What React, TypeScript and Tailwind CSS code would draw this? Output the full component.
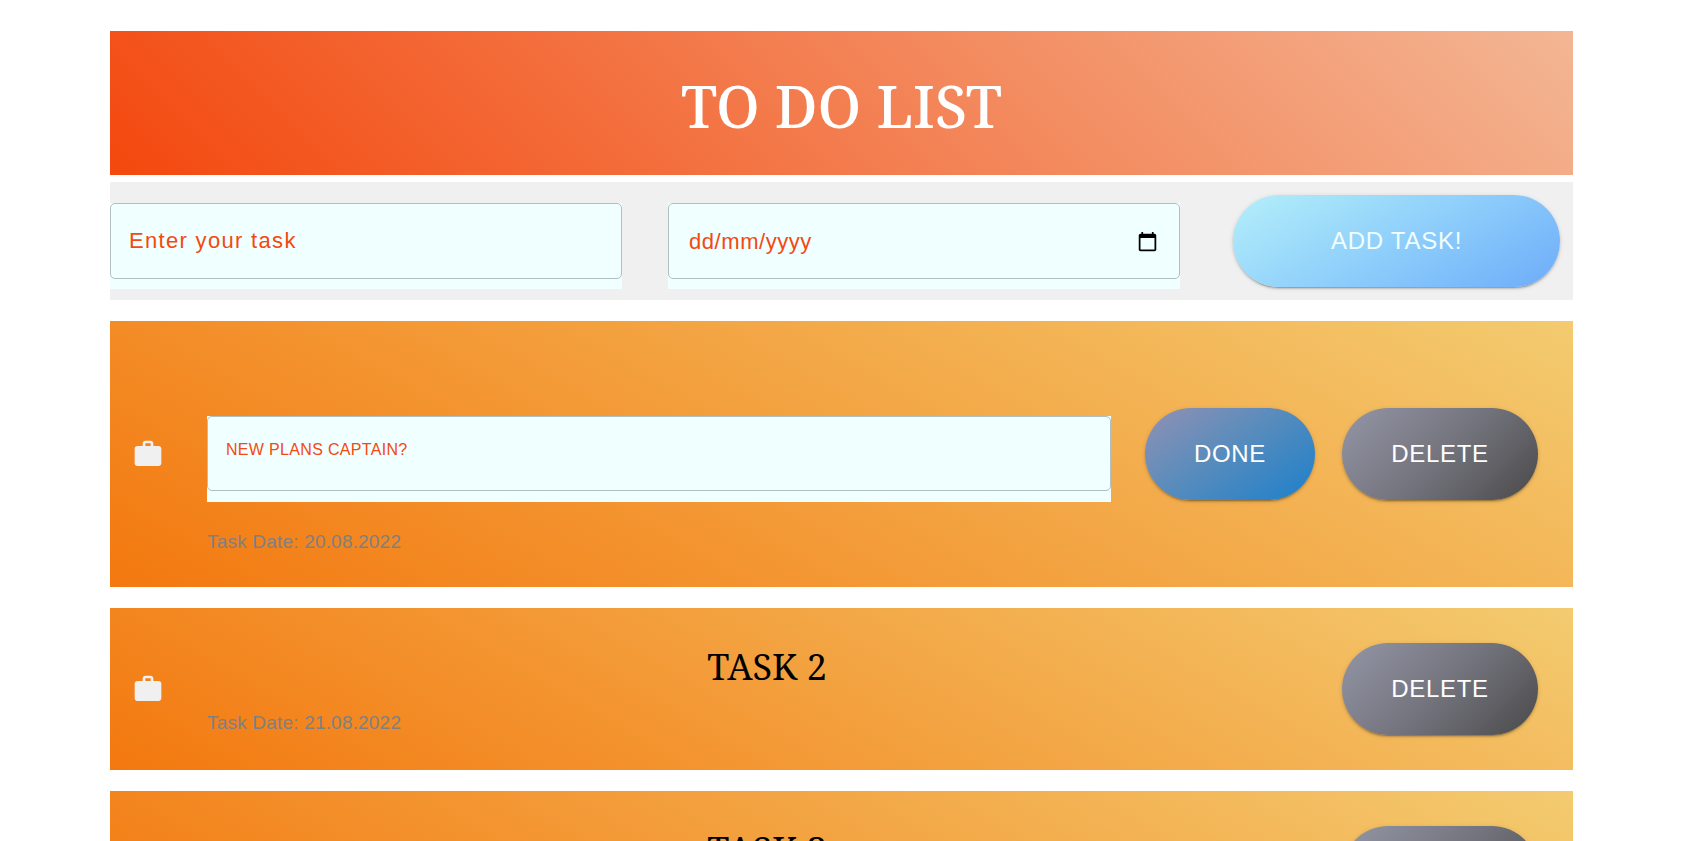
import { useState } from "react";
import type { ReactNode } from "react";
import { MdCalendarToday, MdWork } from "react-icons/md";

type Task = { id: number; title: string; date: string; editing?: boolean };

const initialTasks: Task[] = [
  { id: 1, title: "", date: "20.08.2022", editing: true },
  { id: 2, title: "Task 2", date: "21.08.2022" },
  { id: 3, title: "Task 3", date: "22.08.2022" },
];

const shadow =
  "shadow-[0_3px_1px_-2px_rgba(0,0,0,0.2),0_2px_2px_0_rgba(0,0,0,0.14),0_1px_5px_0_rgba(0,0,0,0.12)]";

function PillButton({
  children,
  className,
  onClick,
  type = "button",
}: {
  children: ReactNode;
  className: string;
  onClick?: () => void;
  type?: "button" | "submit";
}) {
  return (
    <button
      type={type}
      onClick={onClick}
      className={`h-[92px] shrink-0 cursor-pointer rounded-full text-2xl tracking-[0.03em] uppercase ${shadow} ${className}`}
    >
      {children}
    </button>
  );
}

function TaskCard({ task, onDelete, onDone }: { task: Task; onDelete: () => void; onDone: () => void }) {
  return (
    <li
      className={`flex items-center bg-[linear-gradient(30deg,#f3780f,#f3cb70)] pr-[35px] pl-[22px] ${
        task.editing ? "h-[266px]" : "h-[162px]"
      }`}
    >
      <MdWork className="mr-[43px] size-8 shrink-0 text-[#f0f0f0]" aria-hidden="true" />
      <div className={`min-w-0 flex-1 ${task.editing ? "pt-[62px]" : "pt-1"}`}>
        {task.editing ? (
          <div className="mb-7 bg-[azure] pb-[11px]">
            <input
              aria-label="New task title"
              placeholder="NEW PLANS CAPTAIN?"
              className="block h-[75px] w-full rounded-[5px] border border-[#b0c0c0] bg-[azure] px-[18px] pb-2 text-base tracking-[0.02em] text-[#f4490f] outline-none placeholder:text-[#f4490f]"
            />
          </div>
        ) : (
          <h2 className="mb-6 text-center font-['Noto_Serif','Droid_Serif','Liberation_Serif',serif] text-4xl text-black uppercase">
            {task.title}
          </h2>
        )}
        <p className="text-[19px] leading-6 tracking-[0.01em] text-[#808080]">Task Date: {task.date}</p>
      </div>
      {task.editing && (
        <PillButton
          onClick={onDone}
          className="ml-[34px] w-[170px] bg-[linear-gradient(145deg,#9291b3,#5a8cbc_45%,#1c80cb)] text-white"
        >
          Done
        </PillButton>
      )}
      <PillButton
        onClick={onDelete}
        className={`w-[196px] bg-[linear-gradient(135deg,#9496a6,#74747e_50%,#4a4a4a)] text-white ${
          task.editing ? "ml-[27px]" : "ml-[15px]"
        }`}
      >
        Delete
      </PillButton>
    </li>
  );
}

export default function App() {
  const [tasks, setTasks] = useState(initialTasks);
  const [title, setTitle] = useState("");
  const [date, setDate] = useState("");

  const addTask = () => {
    if (!title) return;
    setTasks([...tasks, { id: Date.now(), title, date }]);
    setTitle("");
    setDate("");
  };

  return (
    <main className="min-h-screen bg-white pt-[31px] pr-[129px] pb-5 pl-[110px] font-['Liberation_Sans',Arial,sans-serif]">
      <header className="flex h-36 items-center justify-center bg-[linear-gradient(45deg,#f3480e,#f3b694)]">
        <h1 className="pt-1 font-['Noto_Serif','Droid_Serif','Liberation_Serif',serif] text-[58px] font-medium text-white">
          TO DO LIST
        </h1>
      </header>

      <form
        className="mt-[7px] flex h-[118px] items-center bg-[#f0f0f0]"
        onSubmit={(e) => {
          e.preventDefault();
          addTask();
        }}
      >
        <div className="mt-2.5 mr-[46px] w-[35%] shrink-0 bg-[azure] pb-2.5">
          <input
            aria-label="Task"
            value={title}
            onChange={(e) => setTitle(e.target.value)}
            placeholder="Enter your task"
            className="block h-[76px] w-full rounded-[5px] border border-[#b0c0c0] bg-[azure] px-[18px] text-[22px] tracking-[0.06em] text-[#f4490f] outline-none placeholder:text-[#f4490f]"
          />
        </div>
        <div className="mt-2.5 mr-[53px] w-[35%] shrink-0 bg-[azure] pb-2.5">
          <div className="flex h-[76px] items-center rounded-[5px] border border-[#b0c0c0] pr-[21px] pl-5">
            <input
              aria-label="Date"
              value={date}
              onChange={(e) => setDate(e.target.value)}
              placeholder="dd/mm/yyyy"
              className="min-w-0 flex-1 bg-transparent text-[22px] tracking-wide text-[#f4490f] outline-none placeholder:text-[#f4490f]"
            />
            <button type="button" aria-label="Open calendar" className="text-black">
              <MdCalendarToday className="size-[21px]" />
            </button>
          </div>
        </div>
        <PillButton
          type="submit"
          className="mr-[13px] flex-1 bg-[linear-gradient(150deg,#b4effa,#8fcffb_50%,#6dacf9)] text-[azure]"
        >
          Add task!
        </PillButton>
      </form>

      <ul className="mt-[21px] flex flex-col gap-[21px]">
        {tasks.map((task) => (
          <TaskCard
            key={task.id}
            task={task}
            onDelete={() => setTasks(tasks.filter((t) => t.id !== task.id))}
            onDone={() => setTasks(tasks.map((t) => (t.id === task.id ? { ...t, editing: false } : t)))}
          />
        ))}
      </ul>
    </main>
  );
}
